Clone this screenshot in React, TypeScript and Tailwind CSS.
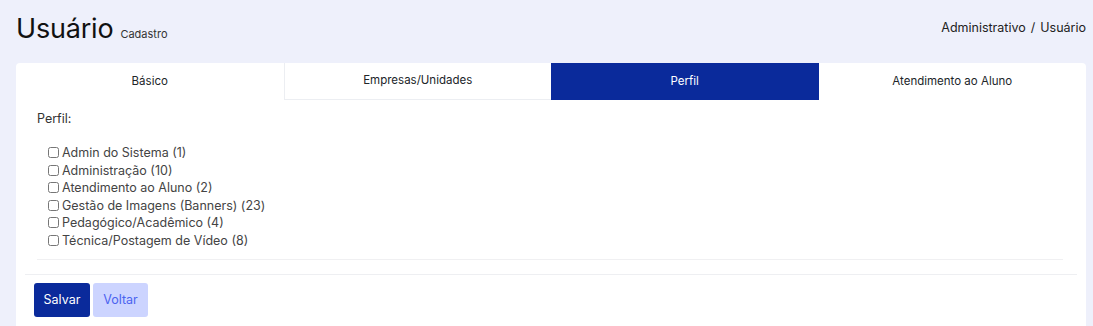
import React from 'react';

const perfis = [
  'Admin do Sistema (1)',
  'Administração (10)',
  'Atendimento ao Aluno (2)',
  'Gestão de Imagens (Banners) (23)',
  'Pedagógico/Acadêmico (4)',
  'Técnica/Postagem de Vídeo (8)',
];

export default function App() {
  return (
    <div className="min-h-screen bg-[#eef0fb] pl-4 pr-[7px] text-[#212529] [font-family:Inter,'Noto_Sans',sans-serif]">
      {/* Header */}
      <div className="flex h-[63px] items-center justify-between pb-[6px]">
        <div className="flex items-baseline gap-[7px]">
          <h1 className="text-[27px] font-normal leading-none tracking-[-0.2px] text-[#111]">Usuário</h1>
          <span className="text-[11px] text-[#333]">Cadastro</span>
        </div>
        <div className="flex items-center gap-[5px] text-[12.5px] text-[#222]">
          <span>Administrativo</span>
          <span>/</span>
          <span>Usuário</span>
        </div>
      </div>

      {/* Card */}
      <div className="rounded-t-[4px] bg-white">
        <div className="grid h-[37px] grid-cols-4 text-[11.5px]">
          <div className="flex items-center justify-center rounded-tl-[4px]">Básico</div>
          <div className="flex items-center justify-center border-b border-l border-[#eceef2]">Empresas/Unidades</div>
          <div className="flex items-center justify-center bg-[#0a2a9b] text-white">Perfil</div>
          <div className="flex items-center justify-center rounded-tr-[4px]">Atendimento ao Aluno</div>
        </div>

        <div className="px-[21px] pr-[23px] pt-[10px]">
          <div className="text-[12.5px] leading-[18px] text-[#333]">Perfil:</div>
          <div className="mt-[16px] flex flex-col pl-[11px] text-[12.5px] leading-[17.5px] text-[#444]">
            {perfis.map((p) => (
              <label key={p} className="flex items-center gap-[3px]">
                <input type="checkbox" className="m-0 h-[11px] w-[11px]" />
                <span>{p}</span>
              </label>
            ))}
          </div>
          <div className="mt-[10px] border-b border-[#f0f0f2]" />
        </div>

        <div className="mx-[9px] mt-[14px] border-b border-[#eeeff2]" />

        <div className="flex gap-[3px] px-[18px] pt-[8px] pb-[10px] text-[12.5px]">
          <button className="h-[34px] w-[56px] rounded-[3px] bg-[#0a2a9b] text-white">Salvar</button>
          <button className="h-[34px] w-[55px] rounded-[3px] bg-[#ccd4ff] text-[#4b63f0]">Voltar</button>
        </div>
      </div>
    </div>
  );
}
